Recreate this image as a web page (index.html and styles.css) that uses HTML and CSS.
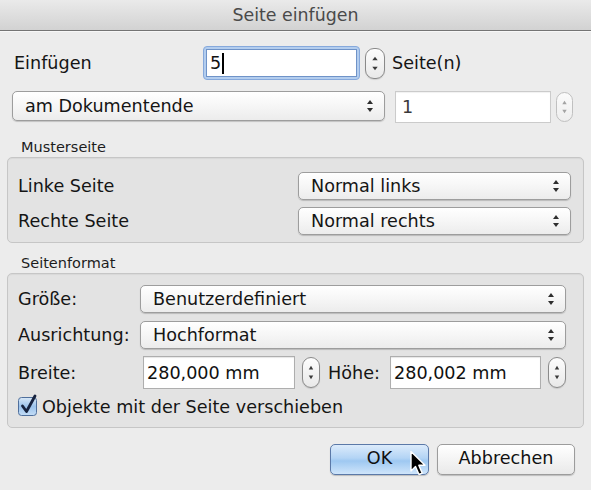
FILE: index.html
```html
<!DOCTYPE html>
<html lang="de">
<head>
<meta charset="utf-8">
<title>Seite einfügen</title>
<link rel="stylesheet" href="styles.css">
</head>
<body>
<div class="titlebar">Seite einfügen</div>
<div class="content">
  <div class="row row1">
    <span class="lbl lbl-einf">Einfügen</span>
    <div class="focus"><div class="field field-focus">5<span class="caret"></span></div></div>
    <span class="stepper stepper-big"><svg viewBox="0 0 20 31" width="20" height="31"><polygon points="7,12 10,8 13,12" /><polygon points="7,19 10,23 13,19" /></svg></span>
    <span class="lbl lbl-seiten">Seite(n)</span>
  </div>
  <div class="row row2">
    <div class="popup popup-pos"><span class="ptext">am Dokumentende</span><svg class="arrows" viewBox="0 0 8 14" width="8" height="14"><polygon points="1,5 4,1 7,5"/><polygon points="1,9 4,13 7,9"/></svg></div>
    <div class="field field-page">1</div>
    <span class="stepper stepper-dis"><svg viewBox="0 0 17 30" width="17" height="30"><polygon points="6,12 8.5,8 11,12" /><polygon points="6,18 8.5,22 11,18" /></svg></span>
  </div>

  <div class="gtitle gtitle1">Musterseite</div>
  <div class="group group1">
    <div class="grow">
      <span class="lbl glbl">Linke Seite</span>
      <div class="popup popup-master"><span class="ptext">Normal links</span><svg class="arrows" viewBox="0 0 8 14" width="8" height="14"><polygon points="1,5 4,1 7,5"/><polygon points="1,9 4,13 7,9"/></svg></div>
    </div>
    <div class="grow">
      <span class="lbl glbl">Rechte Seite</span>
      <div class="popup popup-master"><span class="ptext">Normal rechts</span><svg class="arrows" viewBox="0 0 8 14" width="8" height="14"><polygon points="1,5 4,1 7,5"/><polygon points="1,9 4,13 7,9"/></svg></div>
    </div>
  </div>

  <div class="gtitle gtitle2">Seitenformat</div>
  <div class="group group2">
    <div class="frow">
      <span class="lbl flbl">Größe:</span>
      <div class="popup popup-fmt"><span class="ptext">Benutzerdefiniert</span><svg class="arrows" viewBox="0 0 8 14" width="8" height="14"><polygon points="1,5 4,1 7,5"/><polygon points="1,9 4,13 7,9"/></svg></div>
    </div>
    <div class="frow">
      <span class="lbl flbl">Ausrichtung:</span>
      <div class="popup popup-fmt"><span class="ptext">Hochformat</span><svg class="arrows" viewBox="0 0 8 14" width="8" height="14"><polygon points="1,5 4,1 7,5"/><polygon points="1,9 4,13 7,9"/></svg></div>
    </div>
    <div class="frow frow-dim">
      <span class="lbl dlbl">Breite:</span>
      <div class="field field-dim">280,000 mm</div>
      <span class="stepper stepper-sm"><svg viewBox="0 0 18 31" width="18" height="31"><polygon points="6.5,12 9,8 11.5,12" /><polygon points="6.5,19 9,23 11.5,19" /></svg></span>
      <span class="lbl hlbl">Höhe:</span>
      <div class="field field-dim field-dim2">280,002 mm</div>
      <span class="stepper stepper-sm"><svg viewBox="0 0 18 31" width="18" height="31"><polygon points="6.5,12 9,8 11.5,12" /><polygon points="6.5,19 9,23 11.5,19" /></svg></span>
    </div>
    <div class="crow">
      <svg class="check" viewBox="0 0 22 22" width="22" height="22">
        <defs>
          <linearGradient id="cb" x1="0" y1="0" x2="0" y2="1">
            <stop offset="0" stop-color="#d9e8f7"/>
            <stop offset="0.5" stop-color="#9cc3ec"/>
            <stop offset="1" stop-color="#c4ddf6"/>
          </linearGradient>
        </defs>
        <rect x="1.5" y="3.5" width="18" height="18" rx="3" fill="url(#cb)" stroke="#4f6f9c" stroke-width="1"/>
        <path d="M5.5 12 L9.5 17.5 L18 2" fill="none" stroke="#17233f" stroke-width="2.8" stroke-linecap="round" stroke-linejoin="round"/>
      </svg>
      <span class="lbl clbl">Objekte mit der Seite verschieben</span>
    </div>
  </div>

  <div class="buttons">
    <div class="btn btn-ok">OK</div>
    <div class="btn btn-cancel">Abbrechen</div>
  </div>
</div>
<svg class="cursor" viewBox="0 0 20 28" width="20" height="28"><path d="M2 1.5 L2 21 L6.5 16.5 L10 24.5 L13.2 23.1 L9.8 15.3 L16 15.3 Z" fill="#000" stroke="#fff" stroke-width="1.4" stroke-linejoin="round"/></svg>
</body>
</html>
```
FILE: styles.css
```css
html, body {
  margin: 0;
  padding: 0;
}
body {
  width: 591px;
  height: 490px;
  overflow: hidden;
  background: #ececec;
  font-family: "DejaVu Sans", "Liberation Sans", sans-serif;
  font-size: 17.6px;
  color: #151515;
  position: relative;
}
.titlebar {
  height: 30px;
  line-height: 30px;
  text-align: center;
  color: #4a4a4a;
  font-size: 17.4px;
  background: linear-gradient(#eaeaea, #d2d2d2);
  border-bottom: 1px solid #747474;
  box-shadow: 0 1px 0 #f7f7f7;
}
.content {
  padding: 0 7px;
  display: flex;
  flex-direction: column;
}
.row {
  display: flex;
}
.row1 {
  margin-top: 15px;
  height: 34px;
  align-items: center;
}
.lbl {
  white-space: nowrap;
}
.lbl-einf {
  margin-left: 7px;
  width: 189px;
}
.focus {
  width: 157px;
  height: 34px;
  box-sizing: border-box;
  border: 1px solid #86a9dc;
  border-radius: 4px;
  background: #b3cdee;
  padding: 2px;
}
.field {
  background: #fff;
  box-sizing: border-box;
  display: flex;
  align-items: center;
  color: #111;
}
.field-focus {
  height: 100%;
  border: 1px solid #6f93c8;
  padding-left: 3px;
}
.caret {
  display: inline-block;
  width: 2px;
  height: 21px;
  background: #000;
  margin-left: 1px;
}
.stepper {
  box-sizing: border-box;
  border-radius: 9px;
  display: block;
  flex: none;
}
.stepper svg {
  display: block;
  width: 100%;
  height: 100%;
}
.stepper polygon {
  fill: #3a3a3a;
}
.stepper-big {
  width: 20px;
  height: 31px;
  margin-left: 5px;
  border: 1px solid #8a8a8a;
  background: linear-gradient(#fdfdfd, #e9e9e9);
  box-shadow: 0 1px 1px rgba(0,0,0,0.12);
}
.lbl-seiten {
  margin-left: 7px;
}
.row2 {
  margin-top: 11px;
  align-items: flex-start;
  height: 32px;
}
.popup {
  box-sizing: border-box;
  height: 28px;
  border: 1px solid #9d9d9d;
  border-radius: 5px;
  background: linear-gradient(#ffffff, #f6f6f6 50%, #ececec);
  box-shadow: 0 1px 1px rgba(0,0,0,0.18);
  display: flex;
  align-items: center;
  padding-left: 12px;
  padding-right: 10px;
  color: #151515;
}
.ptext {
  flex: 1;
  white-space: nowrap;
}
.arrows {
  display: block;
  flex: none;
}
.arrows polygon {
  fill: #2e2e2e;
}
.popup-pos {
  margin-left: 5px;
  width: 373px;
  height: 30px;
}
.field-page {
  margin-left: 10px;
  width: 156px;
  height: 32px;
  border: 1px solid #cbcbcb;
  box-shadow: inset 0 1px 1px rgba(0,0,0,0.06);
  padding-left: 6px;
  color: #3a3a3a;
}
.stepper-dis {
  width: 17px;
  height: 30px;
  margin-left: 5px;
  margin-top: 1px;
  border: 1px solid #c0c0c0;
  background: linear-gradient(#fbfbfb, #eeeeee);
}
.stepper-dis polygon {
  fill: #a4a4a4;
}
.gtitle {
  font-size: 14.5px;
  line-height: 16px;
  height: 16px;
  margin: 0 0 2px 14px;
  color: #1c1c1c;
}
.gtitle1 {
  margin-top: 16px;
}
.gtitle2 {
  margin-top: 12px;
}
.group {
  box-sizing: border-box;
  border: 1px solid #c6c6c6;
  border-radius: 5px;
  background: #e3e3e3;
  box-shadow: inset 0 1px 1px rgba(0,0,0,0.05);
  display: flex;
  flex-direction: column;
}
.group1 {
  height: 86px;
  padding: 14px 12px 7px 10px;
  gap: 7px;
}
.grow {
  display: flex;
  align-items: center;
  height: 28px;
}
.glbl {
  flex: 1;
}
.popup-master {
  width: 273px;
}
.group2 {
  height: 155px;
  padding: 11px 17px 10px 10px;
}
.frow {
  display: flex;
  align-items: center;
  height: 28px;
  margin-bottom: 8px;
}
.flbl {
  width: 122px;
}
.popup-fmt {
  width: 426px;
}
.frow-dim {
  height: 33px;
  margin-top: -1px;
  margin-bottom: 8px;
}
.dlbl {
  width: 125px;
}
.field-dim {
  width: 152px;
  height: 33px;
  border: 1px solid #aeaeae;
  box-shadow: inset 0 1px 1px rgba(0,0,0,0.1);
  padding-left: 3px;
}
.field-dim2 {
  width: 151px;
}
.stepper-sm {
  width: 18px;
  height: 31px;
  margin-left: 7px;
  border: 1px solid #8a8a8a;
  background: linear-gradient(#fdfdfd, #e9e9e9);
  box-shadow: 0 1px 1px rgba(0,0,0,0.12);
}
.hlbl {
  margin-left: 8px;
  width: 62px;
}
.crow {
  display: flex;
  align-items: center;
  height: 20px;
}
.check {
  display: block;
  flex: none;
  margin-left: -1px;
  margin-top: -4px;
}
.clbl {
  margin-left: 3px;
}
.buttons {
  display: flex;
  justify-content: flex-end;
  gap: 8px;
  margin-top: 16px;
  padding-right: 9px;
}
.btn {
  box-sizing: border-box;
  height: 31px;
  border-radius: 5px;
  display: flex;
  align-items: center;
  justify-content: center;
  padding-bottom: 3px;
  color: #111;
  box-shadow: 0 1px 1px rgba(0,0,0,0.2);
}
.btn-ok {
  width: 99px;
  border: 1px solid #5b79a8;
  background: linear-gradient(#dcebfb, #b3d4f5 45%, #9ec8f1 55%, #cfe5fb);
}
.btn-cancel {
  width: 138px;
  border: 1px solid #9c9c9c;
  background: linear-gradient(#ffffff, #f4f4f4 50%, #e9e9e9);
}
.cursor {
  position: absolute;
  left: 409px;
  top: 450px;
}
```
